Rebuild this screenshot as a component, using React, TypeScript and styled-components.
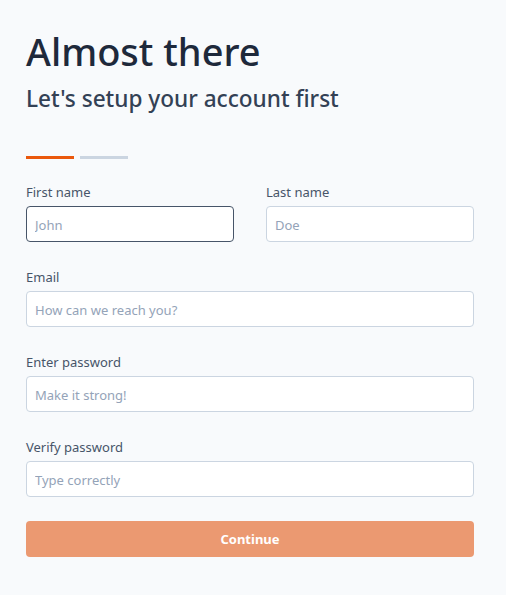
import React from "react";
import styled, { createGlobalStyle } from "styled-components";

const Global = createGlobalStyle`
  html, body { margin: 0; padding: 0; background: #f8fafc; }
  body { font-family: "Noto Sans", "Open Sans", sans-serif; }
  * { box-sizing: border-box; }
`;

const Page = styled.div`
  padding: 27px 32px 38px 26px;
  width: 506px;
  min-height: 595px;
  background: #f8fafc;
`;

const Title = styled.h1`
  margin: 0;
  font-size: 38px;
  line-height: 48px;
  font-weight: 500;
  color: #1e293b;
`;

const Subtitle = styled.h2`
  margin: 9px 0 0 0;
  font-size: 22.6px;
  line-height: 30px;
  font-weight: 500;
  color: #334155;
`;

const Steps = styled.div`
  display: flex;
  gap: 6px;
  margin-top: 42px;
`;

const Step = styled.div<{ $active?: boolean }>`
  width: 48px;
  height: 3px;
  background: ${(p) => (p.$active ? "#ea580c" : "#cbd5e1")};
`;

const Form = styled.form`
  display: flex;
  flex-direction: column;
  gap: 25px;
  margin-top: 23px;
`;

const Row = styled.div`
  display: grid;
  grid-template-columns: 1fr 1fr;
  column-gap: 32px;
`;

const Field = styled.label`
  display: flex;
  flex-direction: column;
`;

const Label = styled.span`
  font-size: 13px;
  line-height: 20px;
  color: #475569;
  margin-bottom: 4px;
`;

const Input = styled.input<{ $focused?: boolean }>`
  height: 36px;
  width: 100%;
  padding: 1px 8px 0 8px;
  font-family: "Noto Sans", "Open Sans", sans-serif;
  font-size: 13px;
  color: #1e293b;
  background: #ffffff;
  border: 1px solid ${(p) => (p.$focused ? "#475569" : "#cbd5e1")};
  border-radius: 4px;
  outline: none;
  &::placeholder { color: #94a3b8; }
`;

const Button = styled.button`
  margin-top: -1px;
  height: 36px;
  width: 100%;
  border: none;
  border-radius: 4px;
  background: #eb9971;
  color: #ffffff;
  font-family: "Noto Sans", "Open Sans", sans-serif;
  font-size: 13px;
  font-weight: 700;
  cursor: pointer;
`;

export default function App() {
  return (
    <>
      <Global />
      <Page>
        <Title>Almost there</Title>
        <Subtitle>Let's setup your account first</Subtitle>
        <Steps>
          <Step $active />
          <Step />
        </Steps>
        <Form onSubmit={(e) => e.preventDefault()}>
          <Row>
            <Field>
              <Label>First name</Label>
              <Input $focused placeholder="John" autoFocus />
            </Field>
            <Field>
              <Label>Last name</Label>
              <Input placeholder="Doe" />
            </Field>
          </Row>
          <Field>
            <Label>Email</Label>
            <Input placeholder="How can we reach you?" />
          </Field>
          <Field>
            <Label>Enter password</Label>
            <Input type="password" placeholder="Make it strong!" />
          </Field>
          <Field>
            <Label>Verify password</Label>
            <Input type="password" placeholder="Type correctly" />
          </Field>
          <Button type="submit">Continue</Button>
        </Form>
      </Page>
    </>
  );
}
